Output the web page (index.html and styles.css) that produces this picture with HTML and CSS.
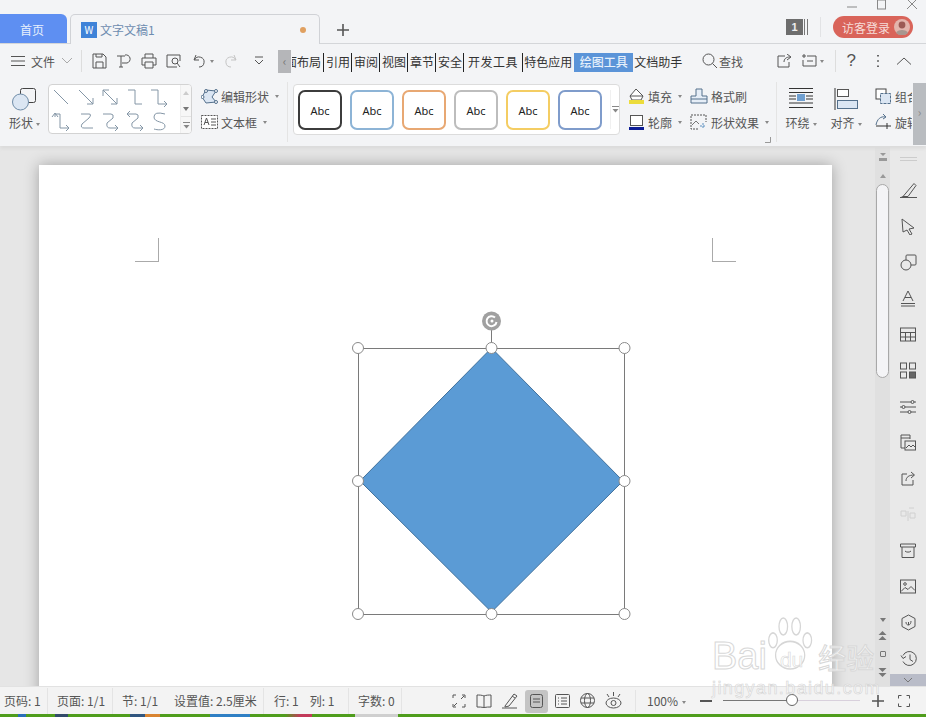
FILE: index.html
```html
<!DOCTYPE html>
<html lang="zh-CN">
<head>
    <meta charset="UTF-8">
    <title>文字文稿1</title>
    <link rel="stylesheet" href="styles.css">
</head>
<body>
<div class="app">

    <!-- title bar -->
    <div class="titlebar">
        <div class="tab-home">首页</div>
        <div class="tab-doc">
            <span class="doc-logo">W</span>
            <span class="doc-name">文字文稿1</span>
            <span class="doc-dot"></span>
        </div>
        <svg class="tab-add" width="14" height="14" viewBox="0 0 14 14"><path d="M7 1v12M1 7h12" stroke="#555" stroke-width="1.6" fill="none"/></svg>
        <div class="title-right">
            <div class="win-btns">
                <svg width="12" height="12" viewBox="0 0 12 12"><path d="M1 8h10" class="thin"/></svg>
                <svg width="12" height="12" viewBox="0 0 12 12"><rect x="1.5" y="1" width="8" height="9" class="thin"/></svg>
                <svg width="12" height="12" viewBox="0 0 12 12"><path d="M1 0l10 10M11 0L1 10" class="thin"/></svg>
            </div>
            <div class="title-user">
                <span class="win-count">1</span>
                <span class="win-stack"></span>
                <span class="user-sep"></span>
                <div class="login">
                    <span>访客登录</span>
                    <svg width="16" height="16" viewBox="0 0 16 16"><circle cx="8" cy="8" r="8" fill="#e3b5ad"/><circle cx="8" cy="6" r="3.4" fill="#9c5a55"/><path d="M2 14c1-4 11-4 12 0l-3 2H5z" fill="#a9968f"/></svg>
                </div>
            </div>
        </div>
    </div>

    <!-- menu row -->
    <div class="menubar">
        <svg class="ico menu-burger" width="14" height="12" viewBox="0 0 14 12"><path d="M0 1.5h14M0 6h14M0 10.5h14"/></svg>
        <span class="menu-file">文件</span>
        <svg class="ico menu-chev" width="10" height="6" viewBox="0 0 10 6"><path d="M0 0l5 5 5-5"/></svg>
        <span class="menu-sep"></span>
        <div class="quick">
            <svg class="ico" width="16" height="16" viewBox="0 0 16 16"><path d="M2 1h10l3 3v11H2zM5 15V9h7v6M5 1v3h6V1"/></svg>
            <svg class="ico" width="16" height="16" viewBox="0 0 16 16"><path d="M1 3h8M5 3v11M9 2a4 4 0 0 1 2 8H6M3 14h4"/></svg>
            <svg class="ico" width="16" height="16" viewBox="0 0 16 16"><path d="M4 5V1h8v4M4 12H1V5h14v7h-3M4 9h8v6H4z"/></svg>
            <svg class="ico" width="16" height="16" viewBox="0 0 16 16"><path d="M11 14H1V2h13v6"/><circle cx="9" cy="8" r="3"/><path d="M11 10l3 4"/></svg>
            <span class="quick-undo">
                <svg class="ico" width="14" height="14" viewBox="0 0 14 14"><path d="M3 1L1 6h5M1.500 6A5 5 0 1 1 6 13"/></svg>
                <i class="caret"></i>
            </span>
            <svg class="ico faded" width="14" height="14" viewBox="0 0 14 14"><path d="M11 1l2 5H8M12.500 6A5 5 0 1 0 8 13"/></svg>
            <svg class="ico quick-more" width="10" height="10" viewBox="0 0 10 10"><path d="M1 1h8M1 4l4 4 4-4"/></svg>
        </div>
        <span class="tabs-prev">‹</span>
        <div class="tabs">
            <span class="tab tab-cut">页面布局</span>
            <span class="tab">引用</span>
            <span class="tab">审阅</span>
            <span class="tab">视图</span>
            <span class="tab">章节</span>
            <span class="tab">安全</span>
            <span class="tab tab-dev">开发工具</span>
            <span class="tab tab-plain">特色应用</span>
            <span class="tab tab-active">绘图工具</span>
            <span class="tab tab-plain">文档助手</span>
        </div>
        <div class="find">
            <svg class="ico" width="16" height="16" viewBox="0 0 16 16"><circle cx="6.500" cy="6.500" r="5.500"/><path d="M10.500 10.500L15 15"/></svg>
            <span>查找</span>
        </div>
        <div class="menu-right">
            <svg class="ico" width="15" height="14" viewBox="0 0 15 14"><path d="M8 2H1v11h11V8M7 8c0-3 2-5 6-5M10 0l4 3-4 3"/></svg>
            <span class="quick-undo">
                <svg class="ico" width="16" height="14" viewBox="0 0 16 14"><path d="M3 0v4M1 2h4M6 2h9v10H2V6M6 7h6"/></svg>
                <i class="caret"></i>
            </span>
            <span class="menu-sep"></span>
            <span class="help">?</span>
            <svg width="4" height="14" viewBox="0 0 4 14"><path d="M2 1v1.500M2 6.200v1.500M2 11.500V13" stroke="#444" stroke-width="1.600"/></svg>
            <svg class="ico menu-up" width="14" height="8" viewBox="0 0 14 8"><path d="M0 7.500L7 1l7 6.500"/></svg>
        </div>
    </div>

    <!-- ribbon -->
    <div class="ribbon">
        <div class="big-btn btn-shape">
            <svg width="25" height="23" viewBox="0 0 25 23"><rect x="8.500" y=".5" width="15" height="14" rx="2" fill="none" stroke="#444"/><circle cx="8.500" cy="14" r="8" fill="#dbe6f3" stroke="#6f8ca8"/></svg>
            <span>形状<i class="caret"></i></span>
        </div>

        <div class="line-gallery">
            <div class="line-grid">
                <svg class="line-ico" viewBox="0 0 20 20"><path d="M3 3l14 14"/></svg>
                <svg class="line-ico" viewBox="0 0 20 20"><path d="M3 3l14 14M11 17h6v-6"/></svg>
                <svg class="line-ico" viewBox="0 0 20 20"><path d="M3 3l14 14M3 9V3h6M11 17h6v-6"/></svg>
                <svg class="line-ico" viewBox="0 0 20 20"><path d="M3 3h7v14h7"/></svg>
                <svg class="line-ico" viewBox="0 0 20 20"><path d="M2 3h7v14h9M15 14l3 3-3 3"/></svg>
                <svg class="line-ico" viewBox="0 0 20 20"><path d="M4 6v-3M1 6l3-4 3 4M4 3h5v14h9M15 14l3 3-3 3"/></svg>
                <svg class="line-ico" viewBox="0 0 20 20"><path d="M5 3h8q3 0 0 4l-7 6q-2 4 2 4h9"/></svg>
                <svg class="line-ico" viewBox="0 0 20 20"><path d="M3 3h8q3 0 2 4l-6 5q-1 5 3 5h8M15 14l3 3-3 3"/></svg>
                <svg class="line-ico" viewBox="0 0 20 20"><path d="M5 0L2 3l3 3M2 3h9q3 0 2 4l-6 5q-1 5 3 5h8M15 14l3 3-3 3"/></svg>
                <svg class="line-ico" viewBox="0 0 20 20"><path d="M16 3Q5 0 5 6c0 6 11 4 11 9 0 5-8 4-11 3"/></svg>
            </div>
            <div class="gallery-scroll">
                <span class="gs-cell"><i class="tri-up faint-tri"></i></span>
                <span class="gs-cell"><i class="tri-down"></i></span>
                <span class="gs-cell gs-last">
                    <svg width="7" height="7" viewBox="0 0 7 7"><path d="M0 .5h7" stroke="#888"/><path d="M.5 3h6l-3 3.500z" fill="#888"/></svg>
                </span>
            </div>
        </div>

        <div class="small-col col-edit">
            <div class="small-btn">
                <svg width="17" height="15" viewBox="0 0 17 15"><path d="M15 2L5 1 1 8l4 6 10-1-4-5z" fill="#dbe6f3" stroke="#54708c"/><circle cx="5" cy="2" r="1.500" fill="#fff" stroke="#54708c"/><circle cx="1.500" cy="8" r="1.500" fill="#fff" stroke="#54708c"/><circle cx="15" cy="2" r="1.500" fill="#fff" stroke="#54708c"/><circle cx="15" cy="13" r="1.500" fill="#fff" stroke="#54708c"/></svg>
                <span>编辑形状</span><i class="caret"></i>
            </div>
            <div class="small-btn">
                <svg width="17" height="14" viewBox="0 0 17 14"><rect x=".5" y=".5" width="16" height="13" fill="#fff" stroke="#555" stroke-dasharray="2 1"/><path d="M3 10l2.500-7L8 10M4 7.500h3M10 4h5M10 7h5M10 10h5" fill="none" stroke="#555"/></svg>
                <span>文本框</span><i class="caret"></i>
            </div>
        </div>
        <span class="ribbon-sep"></span>

        <div class="style-gallery">
            <div class="style-chip chip-black">Abc</div>
            <div class="style-chip chip-blue">Abc</div>
            <div class="style-chip chip-orange">Abc</div>
            <div class="style-chip chip-gray">Abc</div>
            <div class="style-chip chip-yellow">Abc</div>
            <div class="style-chip chip-navy">Abc</div>
            <div class="style-more">
                <svg width="7" height="7" viewBox="0 0 7 7"><path d="M0 .5h7" stroke="#888"/><path d="M.5 3h6l-3 3.500z" fill="#888"/></svg>
            </div>
        </div>

        <div class="small-grid">
            <div class="small-btn">
                <svg width="17" height="17" viewBox="0 0 17 17"><path d="M8 1L2 8l2 4h9l2-4z" fill="#fff" stroke="#555"/><path d="M2 8h13" stroke="#555"/><rect x="1" y="12" width="15" height="4" fill="#ecdc3c"/></svg>
                <span>填充</span><i class="caret"></i>
            </div>
            <div class="small-btn">
                <svg width="18" height="16" viewBox="0 0 18 16"><path d="M1 15V8h5V1h6v7h5v7z" fill="#e6eef7" stroke="#54708c"/><path d="M1 11h16" stroke="#54708c"/></svg>
                <span>格式刷</span>
            </div>
            <div class="small-btn">
                <svg width="17" height="17" viewBox="0 0 17 17"><rect x="2.500" y="1.500" width="12" height="10" fill="#fff" stroke="#555"/><rect x="1" y="13" width="15" height="3" fill="#0c1c96"/></svg>
                <span>轮廓</span><i class="caret"></i>
            </div>
            <div class="small-btn">
                <svg width="18" height="16" viewBox="0 0 18 16"><path d="M8 15H1V1h15v7" fill="none" stroke="#555" stroke-dasharray="2 1"/><path d="M2 11l4-4 3 3" fill="none" stroke="#777"/><path d="M13 9v6M10 12h6" stroke="#5b8fc0" stroke-dasharray="2 1"/></svg>
                <span>形状效果</span><i class="caret"></i>
            </div>
        </div>
        <svg class="launcher" width="6" height="6" viewBox="0 0 6 6"><path d="M5.500 0v5.500H0" fill="none" stroke="#999"/></svg>
        <span class="ribbon-sep"></span>

        <div class="big-btn btn-wrap">
            <svg width="24" height="20" viewBox="0 0 24 20"><path d="M0 .5h24M0 4.500h24M0 8h7M17 8h7M0 11h7M17 11h7M0 15h24M0 19.500h24" stroke="#333" fill="none"/><rect x="8" y="6" width="8" height="7" fill="#6f9fd0"/></svg>
            <span>环绕<i class="caret"></i></span>
        </div>
        <div class="big-btn btn-align">
            <svg width="24" height="22" viewBox="0 0 24 22"><path d="M1 0v22" stroke="#333"/><rect x="3.500" y="1.500" width="11" height="7" fill="#fff" stroke="#555"/><rect x="3.500" y="12.500" width="20" height="8" fill="#dbe6f3" stroke="#54708c"/></svg>
            <span>对齐<i class="caret"></i></span>
        </div>
        <div class="small-col col-group">
            <div class="small-btn">
                <svg width="17" height="16" viewBox="0 0 17 16"><rect x="1" y="1" width="10" height="10" fill="#fff" stroke="#444"/><rect x="5.500" y="5.500" width="10" height="10" fill="#dbe6f3" stroke="#54708c" stroke-dasharray="3 1"/></svg>
                <span>组合</span>
            </div>
            <div class="small-btn">
                <svg width="17" height="16" viewBox="0 0 17 16"><path d="M1 11C2 5 6 2 10 3M8 0l3 3-3 2" fill="none" stroke="#54708c"/><path d="M1 12h15M12 9v6" stroke="#333" fill="none"/></svg>
                <span>旋转</span>
            </div>
        </div>
        <span class="ribbon-next">›</span>
    </div>

    <!-- work area -->
    <div class="workspace">
        <div class="canvas">
            <div class="page">
                <span class="crop crop-left"></span>
                <span class="crop crop-right"></span>
                <svg class="shape" width="300" height="320" viewBox="0 0 300 320">
                    <path d="M152.500 43L284 176 152.500 307 21 176z" fill="#5b9bd5" stroke="#41719c"/>
                    <rect x="19.500" y="43.500" width="266" height="266" fill="none" stroke="#7a7a7a"/>
                    <path d="M152.500 25v18" stroke="#7a7a7a"/>
                    <circle cx="152.500" cy="16" r="9.500" fill="#a0a0a0"/>
                    <path d="M156 12.500a5 5 0 1 0 1.500 4.500" fill="none" stroke="#fff" stroke-width="2"/>
                    <circle cx="153" cy="16" r="1.500" fill="#fff"/>
                    <g fill="#fff" stroke="#8a8a8a">
                        <circle cx="19" cy="43" r="5.500"/>
                        <circle cx="152.500" cy="43" r="5.500"/>
                        <circle cx="285.500" cy="43" r="5.500"/>
                        <circle cx="19" cy="176" r="5.500"/>
                        <circle cx="285.500" cy="176" r="5.500"/>
                        <circle cx="19" cy="309" r="5.500"/>
                        <circle cx="152.500" cy="309" r="5.500"/>
                        <circle cx="285.500" cy="309" r="5.500"/>
                    </g>
                </svg>
            </div>
        </div>

        <div class="vscroll">
            <svg class="vs-top" width="10" height="8" viewBox="0 0 10 8"><path d="M2 0h6L5 3zM1 5h8v3H1z" fill="#999"/></svg>
            <i class="tri-up"></i>
            <div class="vs-thumb"></div>
            <div class="vs-bottom">
                <i class="tri-down"></i>
                <svg width="9" height="10" viewBox="0 0 9 10"><path d="M4.500 0l4 4H.5zM4.500 5l4 4H.5z" fill="#777"/></svg>
                <span class="vs-dot"></span>
                <svg width="9" height="10" viewBox="0 0 9 10"><path d="M.5 1h8l-4 4zM.5 6h8l-4 4z" fill="#777"/></svg>
            </div>
        </div>

        <div class="sidebar">
            <div class="side-grip"></div>
            <svg class="ico" width="17" height="16" viewBox="0 0 17 16"><path d="M0 15h17M3 14L14 1l2 2-8 11H3zM3 14l-2 1"/></svg>
            <svg class="ico" width="16" height="17" viewBox="0 0 16 17"><path d="M2 1l12 9-5 1 3 5-2 1-3-5-4 2z"/></svg>
            <svg class="ico" width="17" height="17" viewBox="0 0 17 17"><rect x="6" y="1" width="10" height="10" rx="1"/><circle cx="6" cy="11" r="5" fill="#e9e9e9"/></svg>
            <svg class="ico" width="16" height="17" viewBox="0 0 16 17"><path d="M1 16h14M1 13.500h14M3 11L8 1l5 10M5 7.500h6"/></svg>
            <svg class="ico" width="16" height="14" viewBox="0 0 16 14"><rect x=".5" y=".5" width="15" height="13"/><path d="M.5 5h15M.5 9.500h15M5.500 5v8.500M10.500 5v8.500"/></svg>
            <svg class="ico" width="16" height="16" viewBox="0 0 16 16"><rect x=".5" y=".5" width="6" height="6"/><rect x="9.500" y=".5" width="6" height="6"/><rect x=".5" y="9.500" width="6" height="6"/><rect x="9.500" y="9.500" width="6" height="6" fill="#666"/></svg>
            <svg class="ico" width="16" height="15" viewBox="0 0 16 15"><path d="M0 3h11M14 3h2M0 8h2M5 8h11M0 13h8M11 13h5"/><circle cx="12.500" cy="3" r="1.500"/><circle cx="3.500" cy="8" r="1.500"/><circle cx="9.500" cy="13" r="1.500"/></svg>
            <svg class="ico" width="16" height="17" viewBox="0 0 16 17"><path d="M5 14H1V1h9v4M1 4h9"/><rect x="5" y="7" width="10.500" height="9"/><path d="M6 14l3-3 2 2 2-2 2 2"/></svg>
            <svg class="ico" width="15" height="15" viewBox="0 0 15 15"><path d="M6 3H1v11h11V9M5 10c0-4 3-6 8-6M10 1l3.500 3L10 7"/></svg>
            <svg class="ico faint" width="16" height="15" viewBox="0 0 16 15"><path d="M1 4h5v5H1zM9 1h5M8 4v10M10 6h5v5h-5z"/></svg>
            <svg class="ico" width="16" height="15" viewBox="0 0 16 15"><path d="M.5 1h15v3H.5zM2 4v10.500h12V4M5 8c1 1.500 5 1.500 6 0"/></svg>
            <svg class="ico" width="16" height="14" viewBox="0 0 16 14"><rect x=".5" y=".5" width="15" height="13"/><circle cx="5" cy="4.500" r="1.300"/><path d="M1 12l4-4 3 2 3-3 4 4"/></svg>
            <svg class="ico" width="15" height="17" viewBox="0 0 15 17"><path d="M7.500 1L14 4.500v8L7.500 16 1 12.500v-8zM5 8c0 2 1 3 2.500 3S10 9 10 7M7.500 11V8"/></svg>
            <svg class="ico" width="17" height="16" viewBox="0 0 17 16"><path d="M3 5a7 7 0 1 1 0 6M1 5l2 3 3-2M10 4v5l3 2"/></svg>
            <div class="side-down"><svg class="ico" width="8" height="5" viewBox="0 0 8 5"><path d="M0 0l4 4 4-4"/></svg></div>
        </div>

        <div class="watermark">
            <svg class="wm-paw" width="48" height="53" viewBox="0 0 56 50" preserveAspectRatio="none">
                <g fill="none" stroke="#d6d6d6" stroke-width="1.500">
                    <ellipse cx="7" cy="22" rx="5" ry="7"/>
                    <ellipse cx="19" cy="9" rx="5" ry="8"/>
                    <ellipse cx="34" cy="9" rx="5" ry="8"/>
                    <ellipse cx="47" cy="22" rx="5" ry="7"/>
                    <ellipse cx="27" cy="36" rx="17" ry="13"/>
                </g>
            </svg>
            <div class="wm-main"><span>Bai</span><span class="wm-du">du</span><span class="wm-cn">经验</span></div>
            <div class="wm-url">jingyan.baidu.com</div>
        </div>
    </div>

    <!-- status bar -->
    <div class="statusbar">
        <span class="st st-page">页码: 1</span>
        <span class="st st-pages">页面: 1/1</span>
        <span class="st st-sec">节: 1/1</span>
        <span class="st st-set">设置值: 2.5厘米</span>
        <span class="st st-pos">行: 1<b>列: 1</b></span>
        <span class="st st-count">字数: 0</span>
        <div class="views">
            <svg class="ico" width="14" height="14" viewBox="0 0 14 14"><path d="M1 4V1h3M10 1h3v3M13 10v3h-3M4 13H1v-3M2 12l3-3M12 2L9 5"/></svg>
            <svg class="ico" width="16" height="14" viewBox="0 0 16 14"><path d="M8 2C6 1 3 1 1 1v12c2 0 5 0 7 .5 2-.5 5-.5 7-.5V1c-2 0-5 0-7 1zM8 2v11"/></svg>
            <svg class="ico" width="16" height="16" viewBox="0 0 16 16"><path d="M0 15h15M3 13L12 1l3 2-8 10-4 1zM10 3l3 2"/></svg>
            <span class="view-on"><svg class="ico" width="13" height="14" viewBox="0 0 13 14"><rect x=".5" y=".5" width="12" height="13" rx="2"/><path d="M3 5h7M3 8h7"/></svg></span>
            <svg class="ico" width="15" height="14" viewBox="0 0 15 14"><rect x=".5" y=".5" width="14" height="13" rx="1"/><path d="M3 4h1M6 4h6M3 7h1M6 7h6M3 10h1M6 10h6"/></svg>
            <svg class="ico" width="15" height="15" viewBox="0 0 15 15"><circle cx="7.500" cy="7.500" r="7"/><ellipse cx="7.500" cy="7.500" rx="3" ry="7"/><path d="M1 5h13M1 10h13"/></svg>
            <svg class="ico" width="17" height="17" viewBox="0 0 17 17"><ellipse cx="8.500" cy="11" rx="7.500" ry="5"/><circle cx="8.500" cy="11" r="2.500"/><path d="M2 2l2 3M8.500 0v4M15 2l-2 3"/></svg>
        </div>
        <span class="menu-sep sep-zoom"></span>
        <span class="zoom-val">100%<i class="caret"></i></span>
        <svg class="zoom-minus" width="12" height="2" viewBox="0 0 12 2"><path d="M0 1h12" stroke="#555" stroke-width="2"/></svg>
        <div class="slider"><span class="slider-on"></span><span class="slider-knob"></span></div>
        <svg class="zoom-plus" width="12" height="12" viewBox="0 0 12 12"><path d="M6 0v12M0 6h12" stroke="#555" stroke-width="1.600"/></svg>
        <svg class="ico zoom-fit" width="12" height="12" viewBox="0 0 12 12"><path d="M.5 3.500v-3h3M8.500.5h3v3M11.500 8.500v3h-3M3.500 11.500h-3v-3"/></svg>
    </div>
    <div class="taskstrip"></div>
</div>
</body>
</html>
```

FILE: styles.css
```css
* {
    box-sizing: border-box;
}
html, body {
    margin: 0;
    height: 100%;
    overflow: hidden;
}
body {
    font-family: "Noto Sans CJK SC", "Liberation Sans", sans-serif;
    font-size: 12px;
    color: #555;
}
.app {
    position: relative;
    width: 926px;
    height: 717px;
    display: flex;
    flex-direction: column;
    overflow: hidden;
    background: #f3f4f6;
}
.ico {
    fill: none;
    stroke: #555;
    flex: none;
}
.thin {
    fill: none;
    stroke: #888;
}
.faded {
    stroke: #c4c4c4;
}
.faint {
    stroke: #d0d0d0;
}
.caret {
    display: inline-block;
    width: 0;
    height: 0;
    margin-left: 4px;
    vertical-align: middle;
    border-left: 2.5px solid transparent;
    border-right: 2.5px solid transparent;
    border-top: 3px solid #888;
}

/* title bar */
.titlebar {
    height: 44px;
    flex: none;
    display: flex;
    align-items: flex-end;
    border-bottom: 1px solid #d4d6d9;
}
.tab-home {
    width: 67px;
    height: 29px;
    padding: 1px 3px 0 0;
    display: flex;
    align-items: center;
    justify-content: center;
    background: #5e8ff2;
    color: #e8effc;
    border-radius: 0 6px 0 0;
}
.tab-doc {
    width: 250px;
    height: 30px;
    margin-left: 3px;
    margin-bottom: -1px;
    padding: 0 11px 0 10px;
    display: flex;
    align-items: center;
    background: #f3f4f6;
    border: 1px solid #d0d2d6;
    border-bottom: none;
    border-radius: 5px 5px 0 0;
}
.doc-logo {
    width: 16px;
    height: 16px;
    background: #3f83d8;
    color: #fff;
    font-size: 10px;
    line-height: 16px;
    text-align: center;
}
.doc-name {
    margin-left: 3px;
    color: #6d8cb0;
}
.doc-dot {
    width: 6px;
    height: 6px;
    margin-left: auto;
    margin-right: 2px;
    border-radius: 50%;
    background: #e0a060;
}
.tab-add {
    margin: 0 0 6px 16px;
}
.title-right {
    margin-left: auto;
    align-self: stretch;
    display: flex;
    flex-direction: column;
}
.win-btns {
    height: 17px;
    display: flex;
    gap: 18px;
    justify-content: flex-end;
    padding-right: 8px;
    margin-top: -1px;
}
.title-user {
    display: flex;
    align-items: center;
    padding-right: 13px;
}
.win-count {
    width: 17px;
    height: 16px;
    background: #6d6d6d;
    color: #eee;
    font-size: 11px;
    line-height: 16px;
    text-align: center;
    font-family: "Liberation Sans", sans-serif;
    font-weight: bold;
}
.win-stack {
    width: 4px;
    height: 16px;
    border-left: 1px solid #777;
    border-right: 1px solid #777;
    margin-left: 1px;
}
.user-sep {
    width: 1px;
    height: 20px;
    margin: 0 12px 0 12px;
    background: #e2e3e5;
}
.login {
    width: 80px;
    height: 22px;
    padding: 0 3px 0 9px;
    display: flex;
    align-items: center;
    justify-content: space-between;
    border-radius: 11px;
    background: #d9645a;
    color: #f6dcd8;
}

/* menu row */
.menubar {
    height: 34px;
    flex: none;
    padding-left: 11px;
    display: flex;
    align-items: center;
}
.menu-file {
    margin-left: 6px;
    margin-top: 1px;
}
.menu-chev {
    margin-left: 7px;
    stroke: #aaa;
}
.menu-sep {
    width: 1px;
    height: 22px;
    background: #ddd;
    flex: none;
}
.menubar > .menu-sep {
    margin-left: 9px;
}
.quick {
    width: 196px;
    padding-left: 9px;
    display: flex;
    align-items: center;
    gap: 9px;
    flex: none;
}
.quick-undo {
    display: inline-flex;
    align-items: center;
    margin-left: 2px;
}
.quick-undo .caret {
    margin-left: 3px;
}
.quick-more {
    margin-left: 8px;
}
.tabs-prev {
    width: 13px;
    height: 23px;
    flex: none;
    background: #b5b6b9;
    color: #777;
    line-height: 21px;
    text-align: center;
}
.tabs {
    width: 391px;
    height: 19px;
    margin: 3px 0 0 1px;
    display: flex;
    align-items: center;
    overflow: hidden;
    color: #333;
    flex: none;
}
.tab {
    flex: none;
    padding: 0 1px 0 2px;
    height: 19px;
    line-height: 18px;
    border-right: 1px solid #222;
}
.tab-cut {
    margin-left: -21px;
    padding-right: 2px;
}
.tab-dev {
    padding: 0 4px 0 4px;
    letter-spacing: 0.5px;
}
.tab-plain {
    padding: 0 1px;
    border-right: none;
    white-space: nowrap;
}
.tab-active {
    margin-left: 1px;
    padding: 0 5.500px;
    border-right: none;
    background: #5b94d8;
    color: #e6f0fb;
    font-weight: 500;
}
.find {
    margin-left: 19px;
    display: flex;
    align-items: center;
    gap: 1px;
    flex: none;
}
.menu-right {
    margin-left: auto;
    padding-right: 15px;
    display: flex;
    align-items: center;
    gap: 7px;
}
.menu-right .menu-sep {
    margin-left: 4px;
}
.help {
    font-size: 17px;
    line-height: 20px;
    margin: 0 13px 0 4px;
    font-family: "Liberation Sans", sans-serif;
}
.menu-up {
    margin-left: 10px;
}

/* ribbon */
.ribbon {
    position: relative;
    height: 68px;
    flex: none;
    display: flex;
    align-items: flex-start;
    padding-left: 7px;
    box-shadow: 0 3px 3px #dcdcdc;
    z-index: 2;
}
.big-btn {
    display: flex;
    flex-direction: column;
    align-items: center;
    flex: none;
    white-space: nowrap;
}
.big-btn span {
    line-height: 16px;
}
.big-btn .caret {
    margin-left: 3px;
}
.btn-shape {
    width: 35px;
    padding-top: 10px;
    gap: 4px;
}
.btn-wrap {
    width: 30px;
    margin-left: 9px;
    padding-top: 10px;
    gap: 7px;
}
.btn-align {
    width: 30px;
    margin-left: 15px;
    padding-top: 10px;
    gap: 5px;
}
.line-gallery {
    width: 144px;
    height: 50px;
    margin: 6px 0 0 6px;
    flex: none;
    display: flex;
    background: #fff;
    border: 1px solid #d3d3d3;
    border-radius: 4px;
    overflow: hidden;
}
.line-grid {
    width: 131px;
    padding: 0;
    display: grid;
    grid-template-columns: repeat(5, 24.500px);
    grid-auto-rows: 24px;
    align-items: center;
    justify-items: center;
}
.line-ico {
    width: 20px;
    height: 20px;
    fill: none;
    stroke: #8496a6;
}
.gallery-scroll {
    flex: 1;
    display: flex;
    flex-direction: column;
    background: #f7f7f7;
    border-left: 1px solid #eee;
}
.gs-cell {
    flex: 1;
    display: flex;
    align-items: center;
    justify-content: center;
}
.gs-last {
    border-top: 1px solid #e4e4e4;
}
.tri-up, .tri-down {
    display: block;
    width: 0;
    height: 0;
    border-left: 3.500px solid transparent;
    border-right: 3.500px solid transparent;
}
.tri-up {
    border-bottom: 4px solid #999;
}
.faint-tri {
    border-bottom-color: #ccc;
}
.tri-down {
    border-top: 4px solid #777;
}
.small-col {
    flex: none;
    display: flex;
    flex-direction: column;
    gap: 4px;
    padding-top: 7px;
}
.col-edit {
    width: 86px;
    margin-left: 9px;
}
.col-group {
    width: 37px;
    margin-left: 14px;
    overflow: hidden;
}
.small-btn {
    height: 22px;
    display: flex;
    align-items: center;
    gap: 3px;
    white-space: nowrap;
}
.small-btn svg, .small-btn span {
    flex: none;
}
.small-btn .caret {
    margin-left: 3px;
}
.ribbon-sep {
    width: 1px;
    height: 60px;
    flex: none;
    margin-top: 4px;
    background: #e4e4e4;
}
.style-gallery {
    width: 327px;
    height: 51px;
    margin: 6px 0 0 5px;
    padding: 5px 4px;
    flex: none;
    display: flex;
    gap: 8px;
    background: #fff;
    border: 1px solid #dcdcdc;
    border-radius: 4px;
}
.style-chip {
    width: 44px;
    height: 40px;
    flex: none;
    display: flex;
    align-items: center;
    justify-content: center;
    border: 2px solid #999;
    border-radius: 7px;
    color: #222;
    font-family: "Noto Sans", sans-serif;
    font-size: 11px;
}
.chip-black { border-color: #3c3c3c; }
.chip-blue { border-color: #8db4d6; }
.chip-orange { border-color: #e8a873; }
.chip-gray { border-color: #bdbdbd; }
.chip-yellow { border-color: #f4cd63; }
.chip-navy { border-color: #7f9ccb; }
.style-more {
    flex: 1;
    display: flex;
    align-items: center;
    justify-content: center;
    border-left: 1px solid #f0f0f0;
    margin-right: -4px;
}
.small-grid {
    width: 148px;
    margin-left: 8px;
    padding-top: 7px;
    flex: none;
    display: grid;
    grid-template-columns: 62px auto;
    row-gap: 4px;
}
.launcher {
    position: absolute;
    left: 765px;
    top: 59px;
}
.ribbon-next {
    position: absolute;
    right: 0;
    top: 5px;
    width: 13px;
    height: 62px;
    background: #b9bcc0;
    color: #8a8a8a;
    line-height: 58px;
    text-align: center;
}

/* work area */
.workspace {
    position: relative;
    flex: 1;
    min-height: 0;
    display: flex;
    background: #e6e6e6;
}
.canvas {
    width: 875px;
    flex: none;
    padding: 19px 0 0 39px;
    overflow: hidden;
}
.page {
    position: relative;
    width: 793px;
    height: 540px;
    background: #fff;
    box-shadow: 0 0 14px rgba(0, 0, 0, 0.3);
}
.crop {
    position: absolute;
    top: 73px;
    width: 24px;
    height: 24px;
    border-bottom: 1px solid #aaa;
}
.crop-left {
    left: 96px;
    border-right: 1px solid #aaa;
}
.crop-right {
    left: 673px;
    border-left: 1px solid #aaa;
}
.shape {
    position: absolute;
    left: 300px;
    top: 140px;
}
.vscroll {
    position: relative;
    width: 15px;
    flex: none;
    padding-top: 7px;
    display: flex;
    flex-direction: column;
    align-items: center;
    background: #e0e0e0;
}
.vs-top {
    margin-bottom: 13px;
}
.vs-thumb {
    width: 13px;
    height: 194px;
    margin-top: 6px;
    background: #f4f4f6;
    border: 1px solid #a8a8a8;
    border-radius: 7px;
}
.vs-bottom {
    position: absolute;
    left: 0;
    right: 0;
    bottom: 9px;
    display: flex;
    flex-direction: column;
    align-items: center;
    gap: 9px;
}
.vs-dot {
    width: 6px;
    height: 6px;
    border: 1px solid #777;
    border-radius: 1px;
    margin: 1px 0;
}
.sidebar {
    position: relative;
    flex: 1;
    padding-top: 36px;
    display: flex;
    flex-direction: column;
    align-items: center;
    gap: 0;
    background: #e9e9e9;
}
.sidebar > svg {
    height: 17px;
    margin-bottom: 19px;
}
.side-grip {
    position: absolute;
    top: 11px;
    left: 10px;
    width: 17px;
    height: 4px;
    border-top: 1px solid #ccc;
    border-bottom: 1px solid #ccc;
}
.side-down {
    position: absolute;
    left: 0;
    right: 0;
    bottom: 0;
    height: 12px;
    background: #b9bcc8;
    display: flex;
    align-items: center;
    justify-content: center;
}
.side-down .ico {
    stroke: #777;
}
.watermark {
    position: absolute;
    left: 712px;
    top: 468px;
    width: 165px;
    pointer-events: none;
    z-index: 3;
    color: #fff;
    font-family: "Liberation Sans", sans-serif;
}
.wm-paw {
    position: absolute;
    left: 55px;
    top: 3px;
}
.wm-main {
    position: absolute;
    left: 0;
    top: 24px;
    white-space: nowrap;
    font-size: 38px;
    line-height: 36px;
    color: rgba(255, 255, 255, 0.7);
    -webkit-text-stroke: 1px #d8d8d8;
}
.wm-du {
    margin-left: 13px;
    font-size: 21px;
    vertical-align: 2px;
    -webkit-text-stroke: 0.6px #d8d8d8;
}
.wm-cn {
    margin-left: 15px;
    font-family: "Noto Sans CJK SC", sans-serif;
    font-size: 28px;
}
.wm-url {
    position: absolute;
    left: 0;
    top: 63px;
    font-size: 18px;
    letter-spacing: 1.4px;
    line-height: 22px;
    color: rgba(255, 255, 255, 0.6);
    -webkit-text-stroke: 0.6px #d4d4d4;
    white-space: nowrap;
}

/* status bar */
.statusbar {
    position: relative;
    height: 28px;
    flex: none;
    display: flex;
    align-items: center;
    background: #f3f3f3;
    border-top: 1px solid #e2e2e2;
    z-index: 2;
}
.st {
    height: 26px;
    flex: none;
    display: flex;
    align-items: center;
    padding-bottom: 1px;
    white-space: nowrap;
    border-right: 1px solid #e4e4e4;
}
.st b {
    font-weight: normal;
    margin-left: 11px;
}
.st-page { width: 48px; padding-left: 4px; }
.st-pages { width: 65px; padding-left: 9px; }
.st-sec { width: 9px; padding-left: 9px; border-right: none; }
.st-set { width: 142px; padding-left: 52px; }
.st-pos { width: 85px; padding-left: 10px; }
.st-count { width: 53px; padding-left: 9px; }
.views {
    margin-left: 50px;
    width: 183px;
    flex: none;
    display: flex;
    align-items: center;
    gap: 10px;
}
.view-on {
    width: 23px;
    height: 23px;
    margin: 0 -3px -1px;
    display: flex;
    align-items: center;
    justify-content: center;
    background: #c4c4c4;
    border-radius: 3px;
}
.statusbar .sep-zoom {
    margin-left: 0;
    background: #e4e4e4;
}
.zoom-val {
    margin-left: 11px;
    width: 47px;
    flex: none;
}
.zoom-minus {
    margin-left: 6px;
    flex: none;
}
.slider {
    position: relative;
    width: 137px;
    height: 1px;
    margin-left: 11px;
    flex: none;
    background: #d8d0dc;
}
.slider-on {
    position: absolute;
    left: 0;
    top: 0;
    width: 69px;
    height: 1px;
    background: #777;
}
.slider-knob {
    position: absolute;
    left: 63px;
    top: -6px;
    width: 12px;
    height: 12px;
    border: 1px solid #666;
    border-radius: 50%;
    background: #fff;
}
.zoom-plus {
    margin-left: 12px;
    flex: none;
}
.zoom-fit {
    margin-left: 14px;
}
.taskstrip {
    height: 3px;
    flex: none;
    background: linear-gradient(to right, #4f9d1c 0 18px, #2a6fb8 18px 26px, #4f9d1c 26px 55px, #334b6a 55px 68px, #4f9d1c 68px 130px, #31567f 130px 145px, #d98430 145px 160px, #4f9d1c 160px 210px, #2f7fc4 210px 250px, #4f9d1c 250px 285px, #c23a5a 300px 312px, #4f9d1c 312px 355px, #cfcfcf 355px 398px, #4f9d1c 398px 926px);
}
```
